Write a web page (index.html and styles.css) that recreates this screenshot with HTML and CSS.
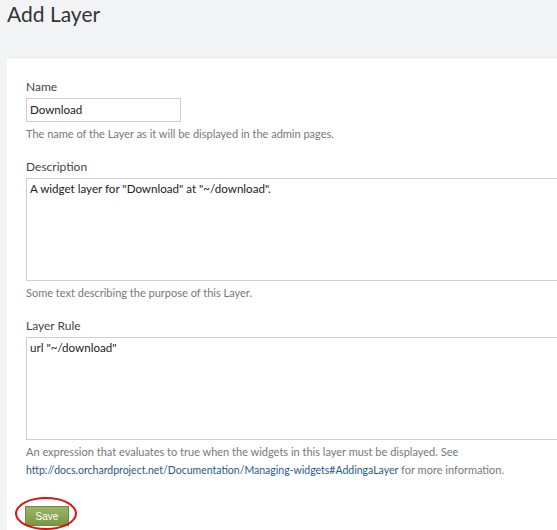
FILE: index.html
```html
<!DOCTYPE html>
<html>
<head>
<meta charset="utf-8">
<link rel="stylesheet" href="styles.css">
</head>
<body>
<h1 class="title">Add Layer</h1>
<div class="panel">
  <div class="field">
    <label class="label">Name</label>
    <div class="input short">Download</div>
    <div class="hint">The name of the Layer as it will be displayed in the admin pages.</div>
  </div>
  <div class="field">
    <label class="label">Description</label>
    <div class="input area">A widget layer for "Download" at "~/download".</div>
    <div class="hint">Some text describing the purpose of this Layer.</div>
  </div>
  <div class="field">
    <label class="label">Layer Rule</label>
    <div class="input area">url "~/download"</div>
    <div class="hint">An expression that evaluates to true when the widgets in this layer must be displayed. See <a class="link" href="#">http://docs.orchardproject.net/Documentation/Managing-widgets#AddingaLayer</a> for more information.</div>
  </div>
  <div class="actions">
    <button class="save">Save</button>
    <span class="circle"></span>
  </div>
</div>
</body>
</html>
```
FILE: styles.css
```css
html, body {
  margin: 0;
  padding: 0;
  background: #f2f3f5;
  font-family: "Segoe UI", Lato, sans-serif;
  color: #333;
  overflow: hidden;
  height: 530px;
}
.title {
  margin: 0;
  padding: 0 0 0 7px;
  font-size: 21px;
  font-weight: normal;
  line-height: 28px;
  color: #333;
}
.panel {
  margin: 29px 0 0 7px;
  background: #fff;
  border-top: 1px solid #e8e9eb;
  padding: 21px 0 0 19px;
  height: 500px;
}
.field {
  display: flex;
  flex-direction: column;
  align-items: flex-start;
  margin-bottom: 16px;
}
.label {
  font-size: 12px;
  line-height: 16px;
  color: #444;
  margin-bottom: 3px;
}
.input {
  box-sizing: border-box;
  border: 1px solid #cfcfcf;
  background: #fff;
  font-family: "Segoe UI", Lato, sans-serif;
  font-size: 11.6px;
  line-height: 16px;
  color: #222;
  padding: 3px 3px;
}
.input.short {
  width: 155px;
  height: 24px;
}
.input.area {
  width: 560px;
  height: 103px;
  padding-top: 2px;
}
.hint {
  font-size: 11px;
  line-height: 18px;
  color: #777;
  margin-top: 3px;
  max-width: 540px;
}
.link {
  color: #1f5a89;
  text-decoration: none;
  font-size: 10.5px;
}
.actions {
  position: relative;
  margin-top: 27px;
}
.save {
  display: block;
  margin-left: -1px;
  width: 44px;
  height: 20px;
  border: 1px solid #6f8a3c;
  background: linear-gradient(#9ab469, #7a9843);
  color: #fff;
  font-family: "Liberation Sans", Arial, sans-serif;
  font-size: 10px;
  padding: 0;
  cursor: pointer;
}
.circle {
  position: absolute;
  left: -11px;
  top: -9px;
  width: 58px;
  height: 29px;
  border: 2px solid #e01010;
  border-radius: 50%;
}
```
